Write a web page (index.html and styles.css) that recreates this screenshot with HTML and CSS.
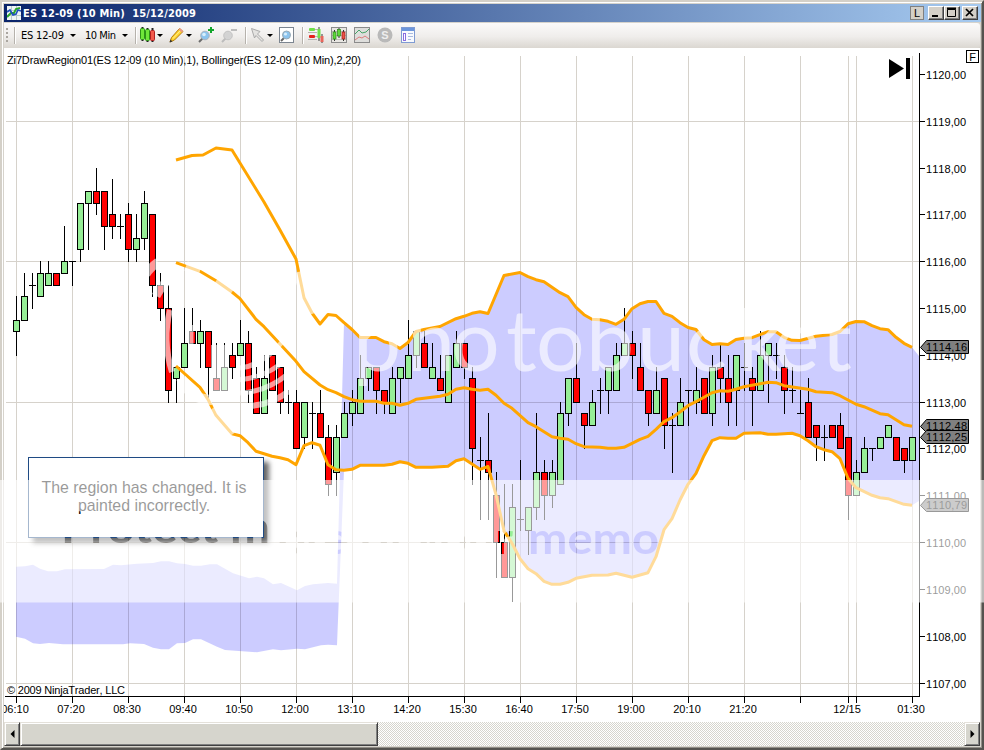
FILE: index.html
```html
<!DOCTYPE html>
<html lang="en">

<head>
  <meta charset="UTF-8">
  <meta name="viewport" content="width=device-width, initial-scale=1.0">
  <title>ES 12-09 (10 Min) 15/12/2009</title>
  <link rel="stylesheet" href="styles.css">
</head>

<body>
  <div class="window">
    <div class="titlebar">
      <svg class="app-icon" width="14" height="14" viewBox="0 0 14 14">
        <rect width="14" height="14" fill="#eef4f4"/>
        <path d="M0 4.5H14M0 9.5H14M4.5 0V14M9.5 0V14" stroke="#b5c9cc"/>
        <path d="M0 11L4 7L7 7L9 3L13 2" fill="none" stroke="#2aa52a" stroke-width="2"/>
        <path d="M0 6L3 4L6 9L9 8L11 4L14 5" fill="none" stroke="#1f4fc0" stroke-width="1.6"/>
      </svg>
      <svg class="title" width="180" height="18"><text x="0" y="13" textLength="173">ES 12-09 (10 Min)&#160; 15/12/2009</text></svg>
      <div class="win-buttons">
        <span class="link-button">L</span>
        <span class="win-button"><svg width="12" height="11"><path d="M2 9H8" stroke="#000" stroke-width="2"/></svg></span>
        <span class="win-button"><svg width="12" height="11"><path d="M1.5 2.5H9.5V9.5H1.5Z" fill="none" stroke="#000"/><path d="M1 1.5H10" stroke="#000" stroke-width="2"/></svg></span>
        <span class="win-button close"><svg width="12" height="11"><path d="M2 2L9 9M9 2L2 9" stroke="#000" stroke-width="1.7"/></svg></span>
      </div>
    </div>

    <div class="toolbar">
      <span class="grip"></span>
      <span class="separator"></span>
      <svg class="tool-label" width="47" height="16"><text x="0" y="11" textLength="43">ES 12-09</text></svg>
      <span class="caret"></span>
      <svg class="tool-label interval" width="35" height="16"><text x="0" y="11" textLength="31">10 Min</text></svg>
      <span class="caret"></span>
      <span class="separator s2"></span>
      <!-- chart style -->
      <svg class="icon i-style" width="15" height="16" viewBox="0 0 15 16">
        <path d="M2.500 0V14M7.500 1V15M12.500 1V15" stroke="#222" stroke-width="2"/>
        <rect x=".5" y="1.500" width="4" height="11" rx="1" fill="#6fe83a" stroke="#2c9416"/>
        <rect x="5.500" y="2.500" width="4" height="11" rx="1" fill="#6fe83a" stroke="#2c9416"/>
        <rect x="10.500" y="3.500" width="4" height="10" rx="1" fill="#f25a4c" stroke="#b02020"/>
      </svg>
      <span class="caret c-style"></span>
      <!-- drawing pencil -->
      <svg class="icon i-pencil" width="15" height="16" viewBox="0 0 15 16">
        <path d="M1 15L2.500 10.500L10.500 1.500L14 4.500L5.500 13Z" fill="#ffd42c" stroke="#b47a10"/>
        <path d="M4 11.500L12 3" stroke="#fff09a"/>
        <path d="M9.500 2.500L11 1L14.300 4L12.800 5.500Z" fill="#e99a86"/>
        <path d="M.5 15.500L1.500 12.500L3.500 14.500Z" fill="#333"/>
      </svg>
      <span class="caret c-pencil"></span>
      <svg class="icon i-zoomin" width="16" height="16" viewBox="0 0 16 16">
        <path d="M1 15L5 11" stroke="#6c6c6c" stroke-width="2"/>
        <circle cx="7" cy="8.500" r="4.300" fill="#8cc4ee" stroke="#aab3bb"/>
        <circle cx="6" cy="7.500" r="1.800" fill="#d8eefc"/>
        <path d="M13 0V6M10 3H16" stroke="#12a52b" stroke-width="2"/>
      </svg>
      <svg class="icon i-zoomout" width="16" height="16" viewBox="0 0 16 16">
        <path d="M1 15L5 11" stroke="#bcbcbc" stroke-width="2"/>
        <circle cx="7" cy="8.500" r="4.300" fill="#d3d3d3" stroke="#c3c3c3"/>
        <path d="M10 3H16" stroke="#bcbcbc" stroke-width="2"/>
      </svg>
      <span class="separator s3"></span>
      <svg class="icon i-cursor" width="15" height="16" viewBox="0 0 15 16">
        <path d="M1.500 1.500L10 4.500L7.500 7L13.500 13L12 14.500L6 8.500L4.500 11Z" fill="#e4e3e1" stroke="#aaa"/>
      </svg>
      <span class="caret c-cursor"></span>
      <svg class="icon i-page" width="15" height="16" viewBox="0 0 15 16">
        <rect x=".5" y=".5" width="14" height="15" fill="#fff" stroke="#7c8590"/>
        <path d="M2 14L5 11" stroke="#666" stroke-width="2"/>
        <circle cx="7.500" cy="8" r="4" fill="#8cc4ee" stroke="#9aaab5"/>
        <circle cx="6.500" cy="7" r="1.600" fill="#d8eefc"/>
      </svg>
      <span class="separator s4"></span>
      <svg class="icon i-trader" width="16" height="16" viewBox="0 0 16 16">
        <path d="M0 5.500H9M7 2.500H10M0 12.500H9M7 9.500H10" stroke="#b5b2ae"/>
        <rect x="1" y="1" width="6" height="3" rx="1" fill="#6fe04a"/>
        <rect x="1" y="8" width="6" height="3" rx="1" fill="#e5201c"/>
        <path d="M11 0V14M14 7V16" stroke="#3a3a3a"/>
        <rect x="9.500" y="2" width="3" height="9" fill="#6fe04a"/>
        <rect x="12.500" y="9" width="3" height="6" fill="#e8665c"/>
      </svg>
      <svg class="icon i-bars" width="16" height="16" viewBox="0 0 16 16">
        <rect x=".5" y=".5" width="15" height="15" fill="#e9e7e3" stroke="#8c8c8c"/>
        <path d="M1 4.500H15M1 8.500H15M1 12.500H15" stroke="#c2c0bc"/>
        <path d="M3.500 3V14M8 1V11M12.500 3V14" stroke="#333"/>
        <rect x="2" y="5" width="3" height="7" fill="#5fd83b" stroke="#2c8a18" stroke-width=".7"/>
        <rect x="6.500" y="2.500" width="3" height="6.500" fill="#5fd83b" stroke="#2c8a18" stroke-width=".7"/>
        <rect x="11" y="5" width="3" height="7" fill="#ee5246" stroke="#961b1b" stroke-width=".7"/>
      </svg>
      <svg class="icon i-indicator" width="16" height="16" viewBox="0 0 16 16">
        <rect x=".5" y=".5" width="15" height="15" fill="#dededc" stroke="#8b8b8b"/>
        <path d="M1 7L5 3L8 6L12 5L15 2" fill="none" stroke="#47a467"/>
        <path d="M1 13L5 10L8 11L11 9L15 12" fill="none" stroke="#df7c7c"/>
      </svg>
      <svg class="icon i-strategy" width="16" height="16" viewBox="0 0 16 16">
        <circle cx="8" cy="8" r="7.500" fill="#b9b9b9"/>
        <text class="s-text" x="8" y="12" text-anchor="middle">S</text>
      </svg>
      <svg class="icon i-props" width="15" height="16" viewBox="0 0 15 16">
        <rect x=".5" y=".5" width="13" height="15" fill="#f8fafe" stroke="#7f9bd2"/>
        <rect x="1" y="1" width="12" height="3" fill="#6c96dc"/>
        <rect x="2.500" y="6.500" width="2" height="7" fill="#fff" stroke="#8a6ee0"/>
        <path d="M7 6.500H12M7 9.500H12M7 12.500H10" stroke="#a9bbe0"/>
      </svg>
    </div>

    <div class="chart">
      <svg id="chart" width="976" height="674" viewBox="4 48 976 674"></svg>
      <div class="note">The region has changed. It is painted incorrectly.</div>
    </div>

    <div class="scrollbar">
      <span class="scroll-button"><svg width="5" height="8"><path d="M4.500 0V8L.5 4Z"/></svg></span>
      <span class="thumb"></span>
      <span class="track"></span>
      <span class="scroll-button"><svg width="5" height="8"><path d="M.5 0V8L4.500 4Z"/></svg></span>
    </div>
  </div>

  <svg class="watermark" width="984" height="750" viewBox="0 0 984 750">
    <defs>
      <mask id="cutout" maskUnits="userSpaceOnUse" x="0" y="470" width="984" height="140">
        <rect x="0" y="480" width="984" height="122.500" fill="#fff"/>
        <g class="slogan">
          <text x="61" y="543" textLength="209" lengthAdjust="spacingAndGlyphs">Protect m</text>
          <text x="278" y="554" textLength="235" lengthAdjust="spacingAndGlyphs">ore of your</text>
          <text x="528" y="554" textLength="131" lengthAdjust="spacingAndGlyphs">memo</text>
        </g>
      </mask>
    </defs>
    <rect x="0" y="480" width="984" height="123" fill="#fff" fill-opacity=".6" mask="url(#cutout)"/>
    <text class="brand" y="371" x="353 407 451 506 536 586 637 686 738 774 821">photobucket</text>
    <g class="swirl">
      <path d="M158 262Q150 268 146 274M168 280Q160 288 156 296" stroke-width="9"/>
      <path d="M170 310Q162 340 172 372" stroke-width="6"/>
      <path d="M181 378Q190 400 212 400" stroke-width="10"/>
      <path d="M191 325V358" stroke-width="5"/>
      <path d="M186 266L200 271M216 281L232 292M298 272Q304 294 312 314" stroke-width="10"/>
      <path d="M213 408L233 434" stroke-width="12"/>
      <rect class="patch" x="211" y="345" width="17" height="46"/>
      <path d="M240 368Q262 366 284 340" stroke-width="5"/>
      <path d="M238 380Q266 378 288 358" stroke-width="5"/>
      <path d="M240 393Q266 392 288 374" stroke-width="5"/>
      <path d="M250 406Q274 404 290 390" stroke-width="6"/>
    </g>
  </svg>

  <script src="chart.js"></script>
</body>

</html>
```

FILE: styles.css
```css
body {
  margin: 0;
  width: 984px;
  height: 750px;
  overflow: hidden;
  position: relative;
  font-family: "Liberation Sans", Arial, sans-serif;
  font-size: 11px;
  color: #000;
}

.window {
  box-sizing: border-box;
  width: 984px;
  height: 750px;
  padding: 2px;
  display: flex;
  flex-direction: column;
  background-color: #d6d3cc;
  border: 2px solid;
  border-color: #d4d0c8 #55534f #55534f #d4d0c8;
  box-shadow: inset 1px 1px #fff, inset -1px -1px #908d86;
}

.titlebar {
  height: 18px;
  flex: none;
  display: flex;
  align-items: center;
  margin-right: -1px;
  padding-left: 3px;
  background: linear-gradient(to right, #0a246a, #a6caf0);
}

.title {
  margin-left: 2px;
}

.title text {
  font: bold 11px "DejaVu Sans Condensed", "DejaVu Sans", sans-serif;
  fill: #fff;
}

.win-buttons {
  display: flex;
  margin-left: auto;
  margin-right: 3px;
}

.link-button {
  box-sizing: border-box;
  width: 14px;
  height: 14px;
  margin-right: 4px;
  border: 1px solid #808080;
  background-color: #d4d0c8;
  text-align: center;
  line-height: 13px;
}

.win-button {
  box-sizing: border-box;
  width: 16px;
  height: 14px;
  padding-left: 1px;
  display: flex;
  background-color: #d4d0c8;
  border: 1px solid;
  border-color: #fff #404040 #404040 #fff;
  box-shadow: inset -1px -1px #808080;
}

.win-button.close {
  margin-left: 2px;
}

/* Toolbar */
.toolbar {
  height: 25px;
  flex: none;
  margin-top: 1px;
  display: flex;
  align-items: center;
  background: linear-gradient(#fbfafa, #efedeb 55%, #dbd7d1);
  border-radius: 0 3px 3px 0;
}

.toolbar > * {
  flex: none;
}

.grip {
  width: 2px;
  height: 15px;
  margin-left: 2px;
  background: repeating-linear-gradient(#aaa6a0 0 2px, transparent 2px 4px);
}

.separator {
  width: 1px;
  height: 17px;
  margin-left: 6px;
  background-color: #b6b2ac;
  box-shadow: 1px 0 #fff;
}

.tool-label {
  margin-left: 6px;
}

.tool-label text {
  font: 11px "DejaVu Sans Condensed", "Noto Sans", sans-serif;
}

.interval {
  margin-left: 9px;
}

.caret {
  width: 0;
  height: 0;
  margin-left: 2px;
  border: 3px solid transparent;
  border-top-color: #000;
  border-bottom: none;
}

.icon {
  margin-bottom: 1px;
}

.s2 { margin-left: 7px; }
.s3 { margin-left: 8px; }
.s4 { margin-left: 8px; }
.i-style { margin-left: 4px; }
.c-style { margin-left: 2px; }
.i-pencil { margin-left: 6px; }
.c-pencil { margin-left: 2px; }
.i-zoomin { margin-left: 6px; }
.i-zoomout { margin-left: 7px; }
.i-cursor { margin-left: 4px; }
.c-cursor { margin-left: 2px; }
.i-page { margin-left: 6px; }
.i-trader { margin-left: 5px; }
.i-bars { margin-left: 7px; }
.i-indicator { margin-left: 7px; }
.i-strategy { margin-left: 7px; }
.i-props { margin-left: 8px; }

.s-text {
  font-weight: bold;
  fill: #eee;
}

/* Chart */
.chart {
  position: relative;
  height: 674px;
  flex: none;
  background-color: #fff;
}

#chart {
  display: block;
}

#chart text {
  font-size: 11px;
  font-kerning: none;
}

.grid {
  fill: #d6d2cb;
}

.region {
  fill: #00f;
  fill-opacity: .2;
}

.band {
  fill: none;
  stroke: #ffa500;
  stroke-width: 3;
  stroke-linejoin: round;
}

.up {
  fill: #96ee96;
  stroke: #000;
}

.down {
  fill: #f00;
  stroke: #000;
}

.marker {
  fill: #808080;
  stroke: #000;
}

.crisp {
  shape-rendering: crispEdges;
}

.note {
  position: absolute;
  left: 24px;
  top: 409px;
  box-sizing: border-box;
  width: 236px;
  height: 81px;
  padding: 21px 15px 0 11px;
  background-color: #fff;
  border: 1px solid #1f4b84;
  box-shadow: 5px 5px 5px rgba(0, 0, 0, .6);
  font-size: 15.9px;
  line-height: 18px;
  text-align: center;
}

/* Scrollbar */
.scrollbar {
  height: 24px;
  flex: none;
  display: flex;
}

.scroll-button,
.thumb {
  box-sizing: border-box;
  background-color: #d6d5cd;
  border: 1px solid;
  border-color: #e4e1da #404040 #404040 #e4e1da;
  box-shadow: inset 1px 1px #fff, inset -1px -1px #808080;
}

.scroll-button {
  width: 16px;
  display: flex;
  align-items: center;
  justify-content: center;
}

.thumb {
  width: 358px;
}

.track {
  flex: 1;
  background: repeating-conic-gradient(#fff 0 25%, #d6d5cd 0 50%) 0 0 / 2px 2px;
}

/* Translucent overlay */
.watermark {
  position: absolute;
  left: 0;
  top: 0;
  pointer-events: none;
}

.brand {
  font: 86px Lato, sans-serif;
  fill: #fff;
  fill-opacity: .6;
}

.slogan {
  font: bold 43px Lato, sans-serif;
  fill: #000;
}

.swirl {
  fill: none;
  stroke: #fff;
  stroke-opacity: .6;
}

.swirl .patch {
  fill: #fff;
  fill-opacity: .6;
  stroke: none;
}
```

FILE: chart.js
```js
// Price levels are quarter-point ticks counted down from 1119,00
const FIRST_X = 16;
const STEP = 8;

// high, body top, body bottom, low, direction (g = up, r = down, d = doji)
const candles = `15 17 18 20 g|13 15 17 17 g|13 14 14 16 d|12 13 15 15 g|12 13 14 14 g|13 13 14 14 r|9 12 13 13 g|12 12 12 14 d
7 7 11 12 g|6 6 7 11 g|4 6 7 8 r|6 6 9 11 r|5 8 9 10 r|8 9 9 10 d|7 8 11 12 r|8 10 11 12 g
6 7 10 11 g|8 8 14 15 r|13 14 16 17 r|14 16 23 24 r|21 21 22 24 g|16 19 21 21 g|16 18 19 19 r|17 18 19 21 g
18 18 21 24 r|19 22 23 23 r|19 21 23 23 g|19 20 21 22 r|17 19 20 20 g|18 19 23 24 r|21 22 25 25 r|20 22 25 25 g
20 20 23 23 r|21 21 24 25 r|23 24 24 25 d|23 24 28 28 r|24 24 27 28 g|24 25 25 28 d|23 25 27 27 r|26 27 31 32 r
26 27 30 32 g|24 25 27 27 g|23 24 25 26 g|20 22 25 25 g|21 21 22 23 g|21 21 23 25 r|23 23 24 25 r|21 22 25 25 g
21 21 22 24 g|17 20 22 22 g|18 18 20 21 g|18 19 21 21 r|19 21 22 22 g|20 22 23 23 r|20 20 24 24 g|18 19 21 21 g
19 19 21 22 r|21 22 28 31 r|27 29 29 34 d|25 29 30 34 r|30 32 36 39 r|31 36 39 39 r|31 33 39 41 g|29 34 34 35 d
33 33 35 37 g|25 30 33 34 g|29 30 32 34 r|29 30 32 33 g|24 25 31 31 g|22 22 25 26 g|19 22 24 24 r|25 25 26 28 r
23 24 26 26 g|22 23 23 25 d|21 21 23 25 g|19 20 23 23 g|16 19 20 20 g|18 19 20 22 r|19 21 23 23 r|23 23 25 26 r
21 23 25 25 g|22 22 26 28 r|25 26 26 30 d|22 24 26 26 g|23 23 23 26 d|21 23 24 25 g|22 22 25 25 r|20 21 25 26 g
19 21 22 24 r|20 22 24 26 r|20 20 23 26 g|19 21 21 23 d|21 22 23 26 r|18 20 23 23 g|19 19 20 24 g|19 20 20 22 d
20 21 23 25 r|21 23 23 24 d|23 25 25 25 d|22 24 27 27 r|26 26 27 29 r|26 27 27 29 d|26 26 27 27 r|25 26 28 28 r
27 27 32 34 r|29 30 32 32 g|27 28 30 30 g|28 28 28 29 d|27 27 28 28 g|26 26 27 27 g|27 27 29 29 r|28 28 29 30 r
27 27 29 29 g`;

const upper = '176,160 192,155.5 203,155 216,148 232,150 264,202 280,230 296,259';
const upperRight = '304,297.7 312,313 320,324 328,314.5 336,315.5';
const upperRegion = '344,322.7 352,329.5 360,337.5 376,337.5 384,341.7 392,343.7 400,348.5 408,342.5 416,331.5 424,329.5 440,326.5 456,318.7 464,316.3 472,313.3 480,311.7 488,313.5 504,275.5 520,272.5 528,276.7 536,279.7 544,281.7 560,292.7 568,296.7 576,307.3 584,314.7 592,319.3 600,319.7 608,321.3 616,324.3 624,319.3 632,308.7 640,303.7 648,301.5 656,301.5 664,313.3 672,316.3 680,322.7 688,327.5 696,329.5 704,339.7 712,344.5 720,343.7 728,344.5 736,339.5 744,338.3 752,337.7 768,331.7 776,331.7 784,337.3 792,340.3 800,340.5 816,336.3 832,334.5 840,331.5 848,323.7 856,321.5 864,321.7 872,325.7 880,328.7 888,329.7 896,337.3 904,343.3 912,347.3';
const middle = '176,262.7 200,271.3 216,280.7 232,292 240,298.7 256,319.3 264,326.7 296,361.3 304,371.7 320,385 328,389.7 336,392.7 344,396.7 352,399.7 360,401.3 376,401.3 384,403.3 392,403.3 400,405.3 408,403.3 416,399.3 440,396.3 448,394.3 456,389.3 464,387.7 472,389.3 480,390.3 488,389.3 496,395.3 504,403.3 512,408.3 528,422.7 536,426.7 552,436.7 560,438.3 568,439.3 576,443.7 584,446.7 600,447.3 608,448.3 616,448.3 624,447.3 632,443.3 640,439.3 648,436.3 656,429.3 664,421.7 672,417.7 680,412 688,405.7 696,401.7 712,392.7 720,390.7 728,391.3 736,389.3 744,386.7 752,385.3 768,382.3 776,382.7 784,385.7 808,389.3 816,391.7 832,392.7 840,395.7 856,404.3 864,406.7 880,413.7 888,414.7 904,424.7 912,426.3';
const lower = '176,366 200,387.3 208,399.3 216,415.3 232,433.7 240,435.7 248,442.7 256,451.3 272,456.3 280,457.7 288,459.7 296,464.7 304,445.7 312,442.7 320,445.3 328,464.7 336,469.7';
const lowerRegion = '344,470.3 352,469.3 360,465.3 384,465.3 392,464.3 400,461.7 408,463.3 416,467.3 432,467.3 448,466.3 456,460.7 464,458.7 480,469.3 488,466.5 496,494.7 504,530.7 512,543.3 520,558.7 528,568.7 536,573.7 544,581.3 552,584.3 560,584.3 568,582.3 576,578.3 592,575.3 608,575 616,573.3 632,577.3 648,572.7 656,556.7 664,529.7 672,518.7 680,500 688,484.3 696,473.3 704,455.7 712,440.7 720,437.7 728,438.3 736,438.3 744,433.3 760,432.7 768,434.3 776,434.3 792,433.3 800,435.7 808,440.7 816,446.7 824,449.7 832,451.7 840,458.7 848,478.3 856,487.7 872,495.3 880,497.7 888,498.7 904,504.3 912,505.3';

// Left part of the region, drawn away from the bands
const leftTop = '16,566.7 25,566.3 33,564.7 40,568.7 48,571.3 57,571.3 65,569.3 104,569 113,564.7 121,565.3 137,563.7 153,563 161,561.3 169,561.3 177,563.3 185,564 193,565.7 201,565.7 210,564.3 217,564.3 233,573.3 249,578.3 257,576.7 264,578.3 273,584.3 281,583 297,590.3 305,586 313,584.3 328,583 337,583.7';
const leftBottom = '16,636.7 25,638.7 33,643.3 40,644 49,643 63,644.3 123,644.3 130,643.3 144,644 153,647.7 161,649.3 169,649.3 177,643.3 185,643 193,639.3 201,639.3 217,646.7 225,650 257,652.3 273,649.3 281,650.3 297,648.7 305,649.3 321,645.3 328,644.7 337,645.3';

const times = [[16, '06:10'], [72, '07:20'], [128, '08:30'], [184, '09:40'], [240, '10:50'], [296, '12:00'], [352, '13:10'], [408, '14:20'], [464, '15:30'], [520, '16:40'], [576, '17:50'], [632, '19:00'], [688, '20:10'], [744, '21:20'], [800, ''], [848, '12/15'], [856, ''], [912, '01:30']];
const markers = [[347, '1114,16'], [426, '1112,48'], [437, '1112,25'], [505, '1110,79']];

function tickY(t) {
  return Math.round(120.7 + 11.705 * t);
}

function reversed(points) {
  return points.split(' ').reverse().join(' ');
}

function rect(x, y, w, h, cls) {
  return `<rect class="${cls || ''}" x="${x}" y="${y}" width="${w}" height="${h}"/>`;
}

function drawChart() {
  let out = '<g class="crisp">';

  // grid
  times.forEach(([x]) => out += rect(x, 56, 1, 640, 'grid'));
  [0, 12, 24, 36, 48].forEach(t => out += rect(6, tickY(t), 913, 1, 'grid'));
  out += '</g>';

  out += `<polygon class="region" points="${leftTop} ${upperRegion} 919,356 919,501 ${reversed(lowerRegion)} ${reversed(leftBottom)}"/>`;

  // candles
  out += '<g class="crisp">';
  candles.split(/[|\n]/).forEach((row, i) => {
    const [high, top, bottom, low, dir] = row.split(' ');
    const x = FIRST_X + i * STEP;
    out += rect(x, tickY(high), 1, tickY(low) - tickY(high) + 1);
    if (dir === 'd') {
      out += rect(x - 3, tickY(top), 7, 1);
    } else {
      out += rect(x - 2.5, tickY(top) + .5, 6, tickY(bottom) - tickY(top), dir === 'g' ? 'up' : 'down');
    }
  });
  out += '</g>';

  // bollinger bands
  [`${upper} ${upperRight} ${upperRegion}`, middle, `${lower} ${lowerRegion}`].forEach(points => {
    out += `<polyline class="band" points="${points}"/>`;
  });

  // axes
  out += '<g class="crisp">' + rect(919, 53, 1, 644) + rect(5, 696, 915, 1);
  times.forEach(([x]) => out += rect(x, 697, 1, 6));
  for (let p = 1107; p <= 1120; p++) {
    out += rect(920, tickY((1119 - p) * 4), 5, 1);
  }
  out += '</g>';
  times.forEach(([x, label]) => {
    if (label) out += `<text x="${x - 1}" y="713" text-anchor="middle">${label}</text>`;
  });
  for (let p = 1107; p <= 1120; p++) {
    out += `<text x="926" y="${tickY((1119 - p) * 4) + 5}" textLength="40">${p},00</text>`;
  }
  markers.forEach(([y, label]) => {
    out += `<path class="marker" d="M920.500 ${y + .5}L926.500 ${y - 6.5}H968.500V${y + 6.5}H926.500Z"/>`;
    out += `<text x="926" y="${y + 4}" textLength="41">${label}</text>`;
  });

  out += '<text x="7" y="64" textLength="354">Zi7DrawRegion01(ES 12-09 (10 Min),1), Bollinger(ES 12-09 (10 Min),2,20)</text>';
  out += '<text x="7" y="694" textLength="118">© 2009 NinjaTrader, LLC</text>';

  // jump to last bar, fixed scale button
  out += '<path d="M889 59L904 68.500L889 78Z"/>' + rect(906, 58, 4, 21);
  out += '<rect class="crisp" x="966.500" y="50.500" width="12" height="12" fill="#fff" stroke="#000"/>';
  out += '<text x="972.500" y="61" text-anchor="middle">F</text>';

  document.getElementById('chart').innerHTML = out;
}

drawChart();
```
